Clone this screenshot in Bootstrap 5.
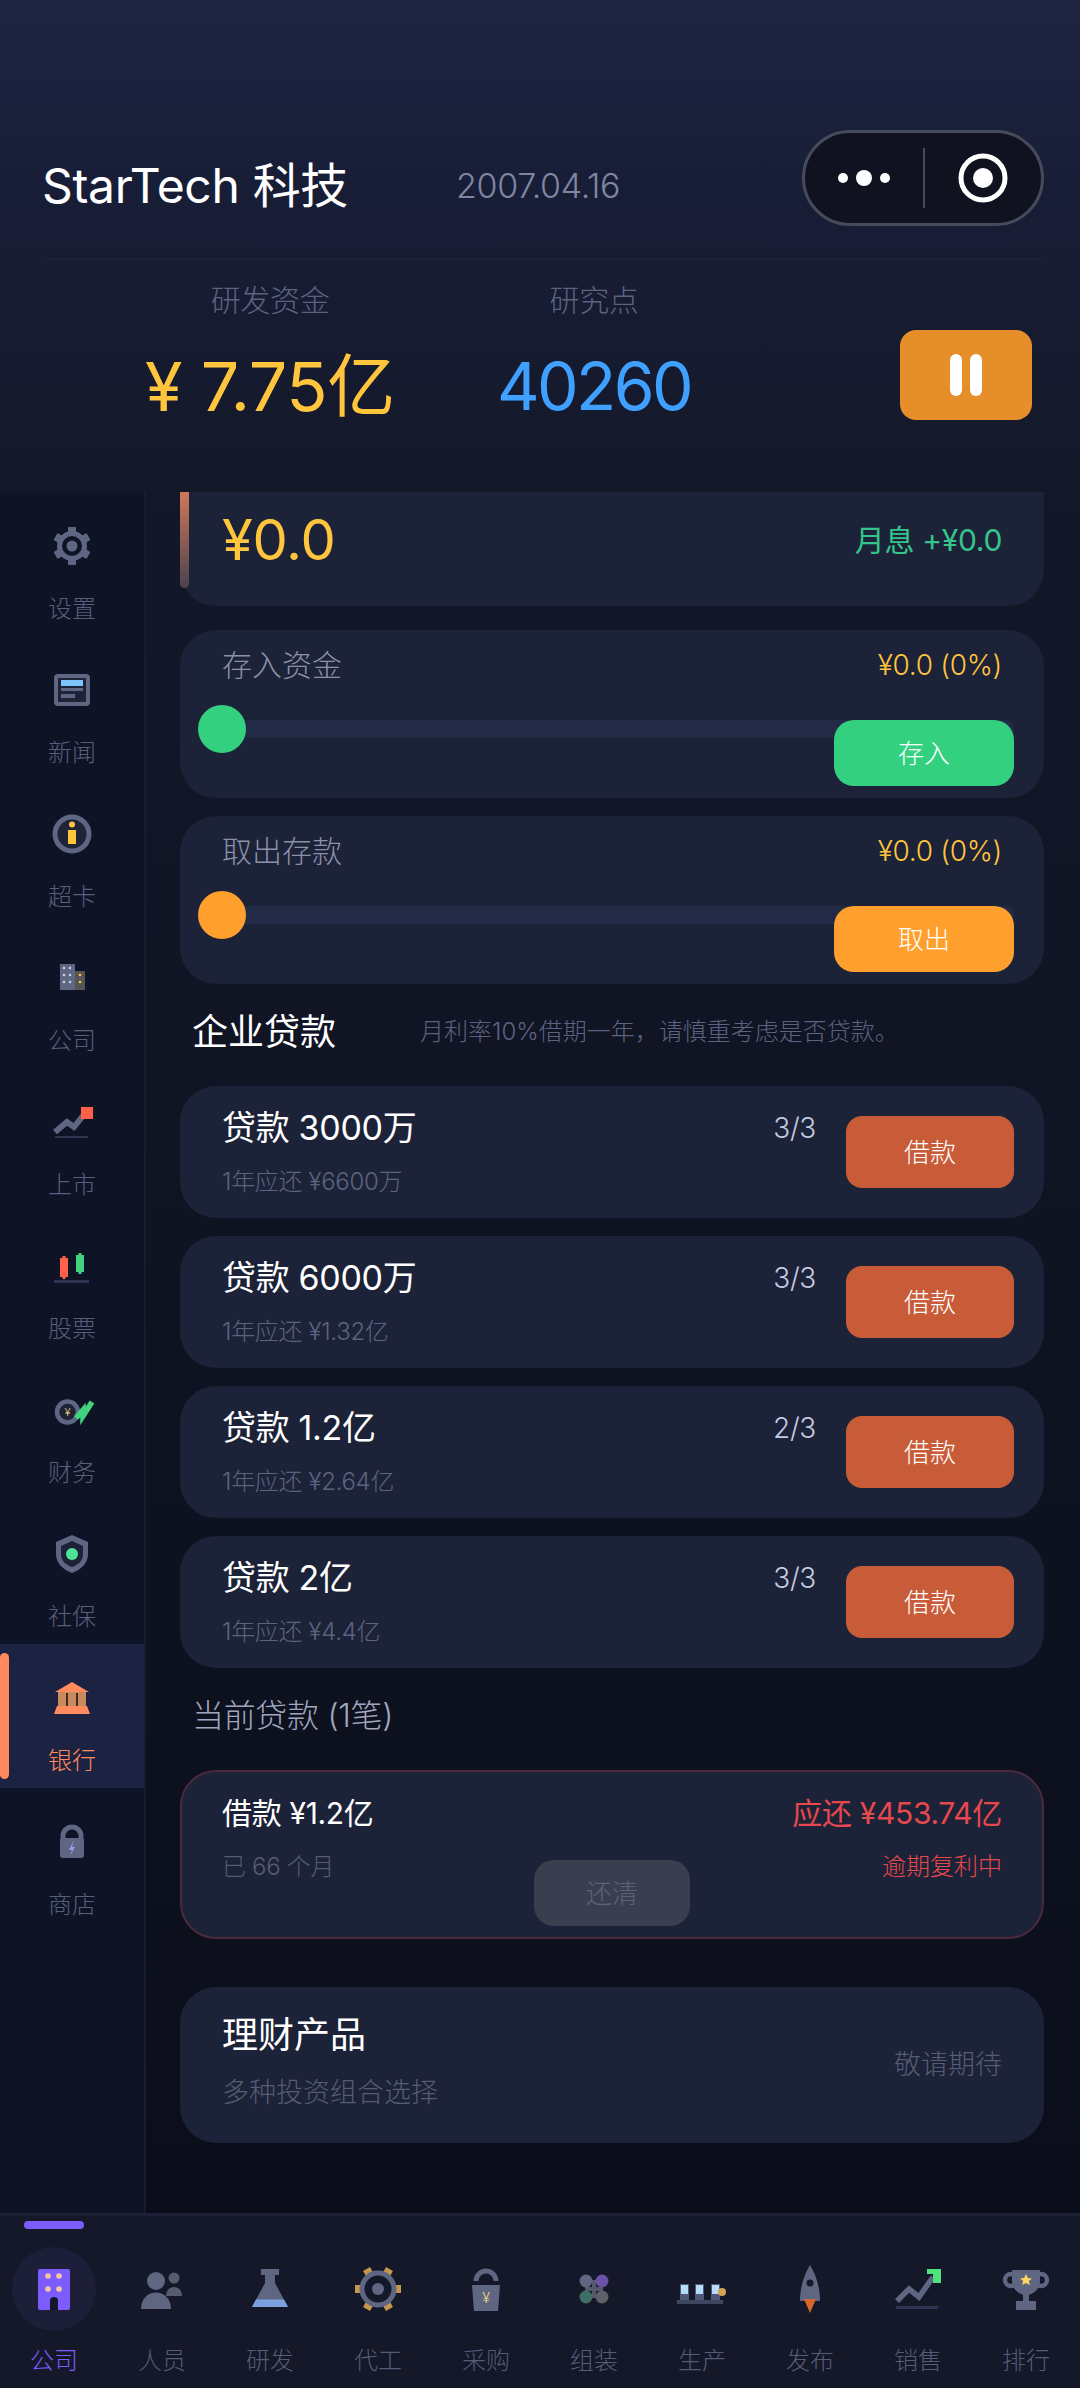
<!DOCTYPE html>
<html lang="zh-CN">
<head>
  <meta charset="UTF-8" />
  <meta name="viewport" content="width=device-width, initial-scale=1" />
  <title>StarTech 科技</title>
  <link href="https://cdn.jsdelivr.net/npm/bootstrap@5.3.3/dist/css/bootstrap.min.css" rel="stylesheet" />
  <style>
    html, body { height: 100%; }
    body {
      width: 1080px;
      height: 2388px;
      overflow: hidden;
      background: #0c0f1c;
      font-family: Inter, "Noto Sans CJK SC", sans-serif;
      font-weight: 300;
      letter-spacing: -0.02em;
      color: #fff;
    }
    svg { display: block; }
    .top-panel {
      height: 492px;
      padding: 130px 36px 0 42px;
      background: linear-gradient(180deg, #1f2443 0%, #191e38 35%, #131829 100%);
    }
    .title-row { height: 128px; }
    .app-title { width: 414px; font-size: 48px; line-height: 1; margin-top: -16px; font-weight: 400; }
    .app-date { font-size: 34px; line-height: 1; color: #7f86a3; margin-top: -16px; }
    .capsule {
      width: 242px; height: 96px;
      border: 3px solid #464b5c;
      border-radius: 48px;
      background: #10131f;
      margin-top: -32px;
    }
    .capsule-line { width: 2px; height: 60px; background: #464b5c; }
    .stat-panel {
      border-top: 2px solid #1b2038;
      height: 234px;
      padding-top: 20px;
    }
    .stat-cell { text-align: center; }
    .stat-money { width: 324px; margin-left: 66px; }
    .stat-points { width: 324px; }
    .stat-label { font-size: 30px; line-height: 40px; color: #5c6380; }
    .stat-value { font-size: 68px; line-height: 80px; margin-top: 26px; font-weight: 400; }
    .value-gold { color: #ffc53d; }
    .value-blue { color: #40a0ff; font-size: 66px; letter-spacing: -0.04em; }
    .pause-btn {
      width: 132px; height: 90px;
      margin-top: 50px; margin-right: 12px;
      background: #e58e2a; border-radius: 16px;
    }
    .pause-btn i { display: block; width: 12px; height: 42px; background: #fff; border-radius: 6px; }
    .mid-area { height: 1721px; }
    .side-nav { width: 146px; background: #0f1326; border-right: 2px solid #181c30; flex-shrink: 0; position: relative; }
    .side-item { height: 144px; padding-top: 30px; position: relative; text-align: center; }
    .side-item svg { margin: 0 auto; }
    .side-name { font-size: 24px; line-height: 30px; margin-top: 24px; color: #585f7a; letter-spacing: 0; }
    .side-on { background: #1c2342; }
    .side-on .side-name { color: #ff8a5c; }
    .side-mark { position: absolute; left: 0; top: 9px; width: 9px; height: 126px; background: #ff8a5c; border-radius: 5px; }
    .main-col { width: 934px; padding: 0 36px 0 34px; background: linear-gradient(180deg, #131728 0%, #0b0e1a 100%); }
    .panel-box { background: #1c2237; border-radius: 36px; padding: 0 42px; position: relative; }
    .balance-box { height: 114px; border-radius: 0 0 36px 36px; }
    .balance-bar { position: absolute; left: 0; top: 0; width: 9px; height: 96px; border-radius: 0 0 5px 5px; background: linear-gradient(180deg, #d0785a, #4d4250); }
    .balance-num { font-size: 56px; line-height: 1; color: #ffc53d; margin-top: 20px; font-weight: 400; }
    .balance-rate { font-size: 30px; line-height: 1; color: #34c48a; margin-top: 33px; font-weight: 400; }
    .slide-box { height: 168px; margin-top: 18px; padding-top: 15px; }
    .slide-first { margin-top: 24px; }
    .slide-label { font-size: 30px; line-height: 40px; color: #8b91a9; letter-spacing: 0; }
    .slide-val { font-size: 28px; line-height: 40px; color: #ffc53d; }
    .slide-track { position: absolute; left: 18px; right: 30px; top: 90px; height: 18px; background: #232a45; border-radius: 9px; }
    .slide-thumb { position: absolute; left: 18px; top: 75px; width: 48px; height: 48px; border-radius: 50%; }
    .btn.slide-btn {
      position: absolute; right: 30px; top: 90px;
      width: 180px; height: 66px; padding: 0;
      border: 0; border-radius: 20px;
      color: #fff; font-size: 26px; font-weight: 300;
    }
    .tone-green { background: #33d17f; }
    .tone-orange { background: #ffa02e; }
    .btn.tone-green { background: #33d17f; }
    .btn.tone-orange { background: #ffa02e; }
    .sect-head { height: 102px; padding: 0 0 6px 12px; }
    .sect-title { font-size: 36px; line-height: 1; width: 228px; font-weight: 400; letter-spacing: 0; }
    .sect-note { font-size: 24px; color: #5c6380; line-height: 1; letter-spacing: 0; }
    .sect-now { font-size: 32px; color: #a0a6bf; line-height: 1; }
    .loan-box { height: 132px; margin-bottom: 18px; padding: 0 30px 0 42px; }
    .loan-name { font-size: 34px; line-height: 40px; color: #fff; margin-top: 22px; font-weight: 400; }
    .loan-due { font-size: 24px; line-height: 32px; color: #5c6380; margin-top: 18px; }
    .loan-count { font-size: 28px; line-height: 40px; color: #c4cbe4; margin-top: 22px; margin-right: 30px; }
    .btn.loan-btn {
      width: 168px; height: 72px; padding: 0; margin-top: 30px;
      background: #c85c38; border: 0; border-radius: 16px;
      color: #fff; font-size: 26px; font-weight: 300;
    }
    .debt-box { height: 169px; border: 2px solid #4b2a3e; padding: 0 40px; }
    .debt-name { font-size: 30px; line-height: 40px; margin-top: 21px; font-weight: 400; }
    .debt-due { font-size: 30px; line-height: 40px; margin-top: 21px; color: #e5484d; text-align: right; font-weight: 400; }
    .debt-age { font-size: 24px; line-height: 32px; margin-top: 18px; color: #565c76; }
    .debt-warn { font-size: 24px; line-height: 32px; margin-top: 18px; color: #e5484d; text-align: right; letter-spacing: 0; }
    .btn.debt-btn {
      position: absolute; left: 352px; top: 88px;
      width: 156px; height: 66px; padding: 0;
      background: #3a3f50; border: 0; border-radius: 20px;
      color: #5c6278; font-size: 26px; font-weight: 300;
    }
    .fund-box { height: 156px; margin-top: 48px; }
    .fund-name { font-size: 36px; line-height: 44px; margin-top: 26px; font-weight: 400; letter-spacing: 0; }
    .fund-sub { font-size: 27px; line-height: 36px; margin-top: 18px; color: #565c76; letter-spacing: 0; }
    .fund-soon { font-size: 27px; color: #565c76; letter-spacing: 0; }
    .tab-bar {
      height: 175px; position: relative;
      background: #141829; border-top: 3px solid #1d2138;
    }
    .tab-mark { position: absolute; left: 24px; top: 5px; width: 60px; height: 8px; background: #7c5cff; border-radius: 4px; }
    .tab-cell { width: 108px; padding-top: 31px; text-align: center; }
    .tab-icon { width: 84px; height: 84px; margin: 0 auto; border-radius: 50%; display: flex; align-items: center; justify-content: center; }
    .tab-on .tab-icon { background: #1d1e38; }
    .tab-name { font-size: 24px; line-height: 30px; margin-top: 15px; color: #565c76; letter-spacing: 0; }
    .tab-on .tab-name { color: #7c5cff; }
  </style>
</head>
<body>
  <div class="top-panel">
    <div class="title-row d-flex align-items-center">
      <div class="app-title">StarTech 科技</div>
      <div class="app-date flex-grow-1">2007.04.16</div>
      <div class="capsule d-flex align-items-center justify-content-around px-3">
        <svg width="52" height="18" viewBox="0 0 52 18"><circle cx="5" cy="9" r="5" fill="#fff"/><circle cx="26" cy="9" r="8" fill="#fff"/><circle cx="47" cy="9" r="5" fill="#fff"/></svg>
        <div class="capsule-line"></div>
        <svg width="50" height="50" viewBox="0 0 50 50"><circle cx="25" cy="25" r="22" fill="none" stroke="#fff" stroke-width="5"/><circle cx="25" cy="25" r="10" fill="#fff"/></svg>
      </div>
    </div>
    <div class="stat-panel d-flex">
      <div class="stat-cell stat-money">
        <div class="stat-label">研发资金</div>
        <div class="stat-value value-gold">¥ 7.75亿</div>
      </div>
      <div class="stat-cell stat-points">
        <div class="stat-label">研究点</div>
        <div class="stat-value value-blue">40260</div>
      </div>
      <div class="flex-grow-1"></div>
      <div class="pause-btn d-flex align-items-center justify-content-center gap-2">
        <i></i><i></i>
      </div>
    </div>
  </div>

  <div class="mid-area d-flex">
    <div class="side-nav">
      <div class="side-item">
        <svg width="48" height="48" viewBox="0 0 48 48"><g fill="#5e6682"><rect x="20" y="5" width="8" height="38" rx="1"/><rect x="20" y="5" width="8" height="38" rx="1" transform="rotate(60 24 24)"/><rect x="20" y="5" width="8" height="38" rx="1" transform="rotate(120 24 24)"/><circle cx="24" cy="24" r="15"/></g><circle cx="24" cy="24" r="10" fill="#0f1326"/><circle cx="24" cy="24" r="5.5" fill="#5e6682"/></svg>
        <div class="side-name">设置</div>
      </div>
      <div class="side-item">
        <svg width="48" height="48" viewBox="0 0 48 48"><rect x="6" y="8" width="36" height="32" rx="4" fill="#5e6682"/><rect x="10" y="12" width="28" height="24" fill="#1e2338"/><rect x="13" y="14" width="22" height="6" fill="#7cc4fb"/><rect x="13" y="22" width="22" height="3" fill="#5e6682"/><rect x="13" y="28" width="14" height="4" fill="#5e6682"/></svg>
        <div class="side-name">新闻</div>
      </div>
      <div class="side-item">
        <svg width="48" height="48" viewBox="0 0 48 48"><circle cx="24" cy="24" r="17" fill="#1e2338" stroke="#5e6682" stroke-width="5"/><circle cx="24" cy="14.500" r="3" fill="#ffc53d"/><rect x="20" y="20" width="8" height="14" fill="#ffc53d"/></svg>
        <div class="side-name">超卡</div>
      </div>
      <div class="side-item">
        <svg width="48" height="48" viewBox="0 0 48 48"><rect x="12" y="10" width="15" height="26" fill="#5e6682"/><rect x="27" y="17" width="10" height="19" fill="#555"/><g fill="#c9cede"><circle cx="16" cy="14" r="1.300"/><circle cx="22" cy="14" r="1.300"/><circle cx="16" cy="21" r="1.300"/><circle cx="22" cy="21" r="1.300"/><circle cx="16" cy="28" r="1.300"/><circle cx="22" cy="28" r="1.300"/></g><g fill="#ffc53d"><circle cx="32" cy="21" r="1.300"/><circle cx="32" cy="28" r="1.300"/></g></svg>
        <div class="side-name">公司</div>
      </div>
      <div class="side-item">
        <svg width="48" height="48" viewBox="0 0 48 48"><path d="M7 34 L19 24 L26 29 L38 14" fill="none" stroke="#5e6682" stroke-width="6"/><rect x="7" y="38" width="33" height="2" fill="#2f3550"/><rect x="33" y="9" width="12" height="12" fill="#ff6048"/></svg>
        <div class="side-name">上市</div>
      </div>
      <div class="side-item">
        <svg width="48" height="48" viewBox="0 0 48 48"><rect x="12" y="16" width="8" height="19" fill="#ff6048"/><rect x="14.500" y="14" width="3" height="23" fill="#ff6048"/><rect x="28" y="13" width="8" height="17" fill="#41d37e"/><rect x="30.500" y="11" width="3" height="21" fill="#41d37e"/><rect x="6" y="38" width="35" height="3" fill="#2f3550"/></svg>
        <div class="side-name">股票</div>
      </div>
      <div class="side-item">
        <svg width="48" height="48" viewBox="0 0 48 48"><circle cx="19.500" cy="26" r="10.500" fill="#1e2338" stroke="#5e6682" stroke-width="4.500"/><text x="19.500" y="30" text-anchor="middle" font-size="11" fill="#ffe08a" font-family="Roboto">¥</text><path d="M28 32 L35 24 L35 30 L44 16" fill="none" stroke="#41d37e" stroke-width="5.500"/></svg>
        <div class="side-name">财务</div>
      </div>
      <div class="side-item">
        <svg width="48" height="48" viewBox="0 0 48 48"><path d="M24 5 L40 12 V24 C40 34 32 40 24 43 C16 40 8 34 8 24 V12 Z" fill="#5e6682"/><path d="M24 11 L35 16 V24 C35 31 30 35 24 37 C18 35 13 31 13 24 V16 Z" fill="#1e2338"/><circle cx="24" cy="24" r="6" fill="#4fe39a"/></svg>
        <div class="side-name">社保</div>
      </div>
      <div class="side-item side-on">
        <div class="side-mark"></div>
        <svg width="48" height="48" viewBox="0 0 48 48"><path d="M24 8 L41 18 H7 Z" fill="#ff8a5c"/><rect x="10" y="18" width="28" height="15" fill="#c98a60"/><rect x="18" y="19" width="2" height="14" fill="#4a2a20"/><rect x="28" y="19" width="2" height="14" fill="#4a2a20"/><path d="M9 32 H39 L42 40 H6 Z" fill="#ff8a5c"/></svg>
        <div class="side-name">银行</div>
      </div>
      <div class="side-item">
        <svg width="48" height="48" viewBox="0 0 48 48"><path d="M15 22 V18 A9 9 0 0 1 33 18 V22" fill="none" stroke="#5e6682" stroke-width="5"/><rect x="12" y="20" width="24" height="20" rx="3" fill="#5e6682"/><path d="M26 22 L21 32 H24 L22 38 L27 29 H24 Z" fill="#9a9cf5"/></svg>
        <div class="side-name">商店</div>
      </div>
    </div>

    <div class="main-col">
      <div class="panel-box balance-box d-flex justify-content-between align-items-start">
        <div class="balance-bar"></div>
        <div class="balance-num">¥0.0</div>
        <div class="balance-rate">月息 +¥0.0</div>
      </div>

      <div class="panel-box slide-box slide-first">
        <div class="d-flex justify-content-between">
          <div class="slide-label">存入资金</div>
          <div class="slide-val">¥0.0 (0%)</div>
        </div>
        <div class="slide-track"></div>
        <div class="slide-thumb tone-green"></div>
        <button class="btn slide-btn tone-green">存入</button>
      </div>
      <div class="panel-box slide-box">
        <div class="d-flex justify-content-between">
          <div class="slide-label">取出存款</div>
          <div class="slide-val">¥0.0 (0%)</div>
        </div>
        <div class="slide-track"></div>
        <div class="slide-thumb tone-orange"></div>
        <button class="btn slide-btn tone-orange">取出</button>
      </div>

      <div class="sect-head d-flex align-items-center">
        <div class="sect-title">企业贷款</div>
        <div class="sect-note">月利率10%借期一年，请慎重考虑是否贷款。</div>
      </div>

      <div class="panel-box loan-box d-flex">
        <div class="flex-grow-1"><div class="loan-name">贷款 3000万</div><div class="loan-due">1年应还 ¥6600万</div></div>
        <div class="loan-count">3/3</div>
        <button class="btn loan-btn">借款</button>
      </div>
      <div class="panel-box loan-box d-flex">
        <div class="flex-grow-1"><div class="loan-name">贷款 6000万</div><div class="loan-due">1年应还 ¥1.32亿</div></div>
        <div class="loan-count">3/3</div>
        <button class="btn loan-btn">借款</button>
      </div>
      <div class="panel-box loan-box d-flex">
        <div class="flex-grow-1"><div class="loan-name">贷款 1.2亿</div><div class="loan-due">1年应还 ¥2.64亿</div></div>
        <div class="loan-count">2/3</div>
        <button class="btn loan-btn">借款</button>
      </div>
      <div class="panel-box loan-box d-flex mb-0">
        <div class="flex-grow-1"><div class="loan-name">贷款 2亿</div><div class="loan-due">1年应还 ¥4.4亿</div></div>
        <div class="loan-count">3/3</div>
        <button class="btn loan-btn">借款</button>
      </div>

      <div class="sect-head d-flex align-items-center">
        <div class="sect-now">当前贷款 (1笔)</div>
      </div>

      <div class="panel-box debt-box d-flex justify-content-between">
        <div><div class="debt-name">借款 ¥1.2亿</div><div class="debt-age">已 66 个月</div></div>
        <div><div class="debt-due">应还 ¥453.74亿</div><div class="debt-warn">逾期复利中</div></div>
        <button class="btn debt-btn">还清</button>
      </div>

      <div class="panel-box fund-box d-flex justify-content-between align-items-center">
        <div class="align-self-start"><div class="fund-name">理财产品</div><div class="fund-sub">多种投资组合选择</div></div>
        <div class="fund-soon">敬请期待</div>
      </div>
    </div>
  </div>

  <div class="tab-bar d-flex">
    <div class="tab-mark"></div>
    <div class="tab-cell tab-on">
      <div class="tab-icon"><svg width="48" height="48" viewBox="0 0 48 48"><rect x="8" y="4" width="32" height="41" rx="2" fill="#7c5cff"/><g fill="#f5c9a0"><circle cx="18" cy="11" r="2.800"/><circle cx="29" cy="11" r="2.800"/><circle cx="18" cy="24" r="2.800"/><circle cx="29" cy="24" r="2.800"/></g><path d="M20 45 V36 A4 4 0 0 1 28 36 V45 Z" fill="#14162a"/></svg></div>
      <div class="tab-name">公司</div>
    </div>
    <div class="tab-cell">
      <div class="tab-icon"><svg width="48" height="48" viewBox="0 0 48 48"><circle cx="18" cy="16" r="9" fill="#5e6682"/><path d="M3 44 C3 22 33 22 33 44 Z" fill="#5e6682"/><circle cx="36" cy="13" r="5.500" fill="#585c6e"/><path d="M28 31 C28 19 44 19 44 31 Z" fill="#585c6e"/></svg></div>
      <div class="tab-name">人员</div>
    </div>
    <div class="tab-cell">
      <div class="tab-icon"><svg width="48" height="48" viewBox="0 0 48 48"><rect x="15" y="4" width="18" height="6" fill="#5e6682"/><path d="M19 10 H29 V18 L42 42 H6 L19 18 Z" fill="#5e6682"/><path d="M10 34.500 H38 L42 42 H6 Z" fill="#7c9fdd"/></svg></div>
      <div class="tab-name">研发</div>
    </div>
    <div class="tab-cell">
      <div class="tab-icon"><svg width="48" height="48" viewBox="0 0 48 48"><g fill="#c49650"><rect x="1" y="20" width="6" height="8"/><rect x="41" y="20" width="6" height="8"/><rect x="1" y="20" width="6" height="8" transform="rotate(60 24 24)"/><rect x="41" y="20" width="6" height="8" transform="rotate(60 24 24)"/><rect x="1" y="20" width="6" height="8" transform="rotate(120 24 24)"/><rect x="41" y="20" width="6" height="8" transform="rotate(120 24 24)"/></g><circle cx="24" cy="24" r="16" fill="none" stroke="#5e6682" stroke-width="5"/><circle cx="24" cy="24" r="6" fill="#5e6682"/></svg></div>
      <div class="tab-name">代工</div>
    </div>
    <div class="tab-cell">
      <div class="tab-icon"><svg width="48" height="48" viewBox="0 0 48 48"><path d="M14 16 A10 10 0 0 1 34 16" fill="none" stroke="#5e6682" stroke-width="5"/><path d="M10 20 H38 L36 46 H12 Z" fill="#5e6682"/><text x="24" y="38" text-anchor="middle" font-size="15" fill="#ffe08a" font-family="Roboto">¥</text></svg></div>
      <div class="tab-name">采购</div>
    </div>
    <div class="tab-cell">
      <div class="tab-icon"><svg width="48" height="48" viewBox="0 0 48 48"><rect x="15" y="22" width="18" height="4" fill="#555a6a"/><rect x="22" y="15" width="4" height="18" fill="#555a6a"/><circle cx="16" cy="16" r="6.500" fill="#5e6682"/><circle cx="32" cy="16" r="6.500" fill="#6a52a8"/><circle cx="16" cy="32" r="6.500" fill="#3f6e66"/><circle cx="32" cy="32" r="6.500" fill="#5f6068"/></svg></div>
      <div class="tab-name">组装</div>
    </div>
    <div class="tab-cell">
      <div class="tab-icon"><svg width="54" height="48" viewBox="0 0 54 48"><rect x="2" y="35" width="46" height="4" fill="#3d4560"/><g fill="#4f5874"><rect x="5" y="19" width="9" height="16"/><rect x="20" y="19" width="9" height="16"/><rect x="36" y="19" width="9" height="16"/></g><g fill="#b5dcfb"><rect x="6" y="20" width="7" height="9"/><rect x="21" y="20" width="7" height="9"/><rect x="37" y="20" width="7" height="9"/></g><circle cx="47" cy="27" r="4" fill="#d7a251"/></svg></div>
      <div class="tab-name">生产</div>
    </div>
    <div class="tab-cell">
      <div class="tab-icon"><svg width="48" height="48" viewBox="0 0 48 48"><path d="M24 0 C30 10 34 22 34 36 H14 C14 22 18 10 24 0 Z" fill="#5e6682"/><circle cx="24" cy="18" r="3.500" fill="#14182a"/><path d="M18 34 H30 L24 48 Z" fill="#d8672a"/></svg></div>
      <div class="tab-name">发布</div>
    </div>
    <div class="tab-cell">
      <div class="tab-icon"><svg width="48" height="48" viewBox="0 0 48 48"><path d="M3 36 L15 24 L25 32 L39 12" fill="none" stroke="#5e6682" stroke-width="5.500"/><rect x="2" y="41" width="42" height="3" fill="#2f3550"/><path d="M33 4 H47 V18 H41 V9 H33 Z" fill="#4fe37e"/><rect x="39" y="8" width="8" height="10" fill="#4fe37e"/></svg></div>
      <div class="tab-name">销售</div>
    </div>
    <div class="tab-cell">
      <div class="tab-icon"><svg width="48" height="48" viewBox="0 0 48 48"><circle cx="9" cy="15" r="6" fill="none" stroke="#5e6682" stroke-width="4.500"/><circle cx="39" cy="15" r="6" fill="none" stroke="#5e6682" stroke-width="4.500"/><path d="M10 5 H38 V16 C38 25 30 30 24 30 C18 30 10 25 10 16 Z" fill="#5e6682"/><rect x="21" y="29" width="6" height="8" fill="#5e6682"/><rect x="14" y="36" width="20" height="9" fill="#5e6682"/><path d="M24 9 L25.800 13 L30 13.400 L26.800 16 L27.800 20 L24 18 L20.200 20 L21.200 16 L18 13.400 L22.200 13 Z" fill="#ffd75e"/></svg></div>
      <div class="tab-name">排行</div>
    </div>
  </div>
  <script src="https://cdn.jsdelivr.net/npm/bootstrap@5.3.3/dist/js/bootstrap.bundle.min.js"></script>
</body>
</html>
